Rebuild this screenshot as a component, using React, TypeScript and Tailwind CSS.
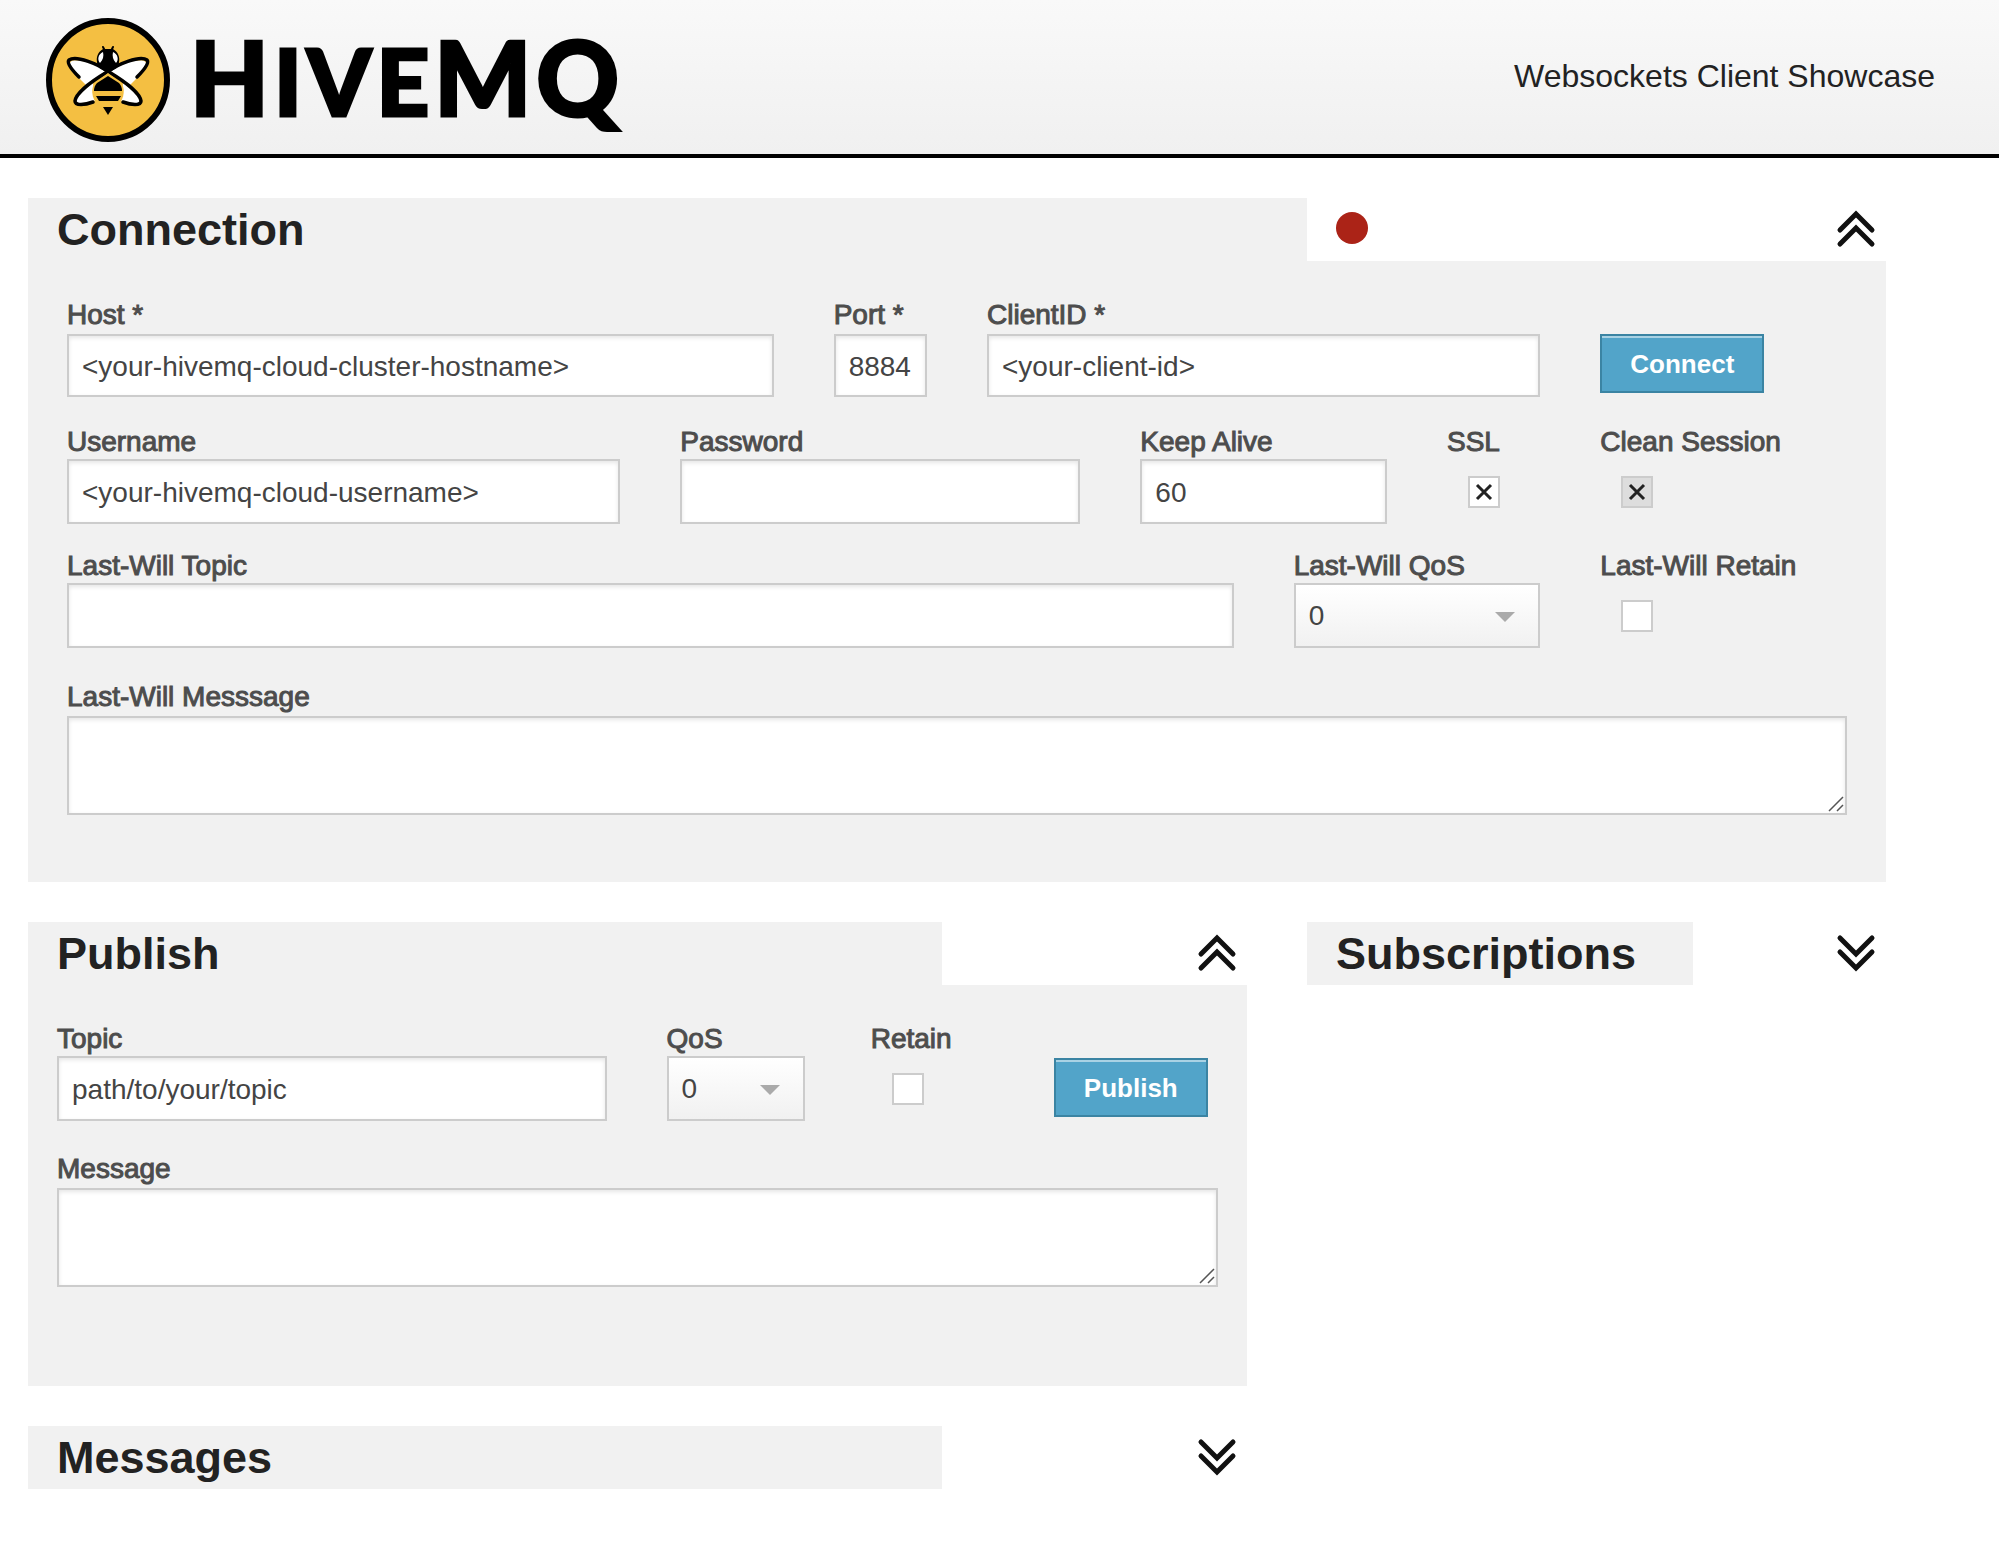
import React, { useId, useState } from "react";

function BeeLogo() {
  return (
    <svg className="size-[124px] shrink-0" viewBox="0 0 124 124" aria-hidden="true">
      <circle cx="62" cy="62" r="59" fill="#f4bf42" stroke="#000" strokeWidth="6" />
      <g fill="#fff">
        <path d="M61 52 C50 46 34 41 26 43 C20 46 28 54 33 60 L41 68 C47 62 54 57 61 52Z" />
        <path d="M63 52 C74 46 90 41 98 43 C104 46 96 54 91 60 L83 68 C77 62 70 57 63 52Z" />
        <path d="M47 65 C40 70 31 78 30 83 C30 87 40 85 49 83Z" />
        <path d="M77 65 C84 70 93 78 94 83 C94 87 84 85 75 83Z" />
      </g>
      <g fill="none" stroke="#000" strokeLinecap="round">
        <path d="M33 59 C27 53 20 45 23 42 C30 37 52 46 63 54 C78 63 94 75 95 83 C95 88 85 87 77 84" strokeWidth="3.5" />
        <path d="M91 59 C97 53 104 45 101 42 C94 37 72 46 61 54 C46 63 30 75 29 83 C29 88 39 87 47 84" strokeWidth="3.5" />
        <path d="M59 33 L57 29 M65 33 L67 29" strokeWidth="2" />
      </g>
      <path d="M57 31 H67 C72 34 74 39 73 44 C73 49 70 51 62 55 C54 51 51 49 51 44 C50 39 52 34 57 31Z" />
      <path d="M57 34 C52 36 51 42 54 45 C57 42 58 38 57 34Z M67 34 C72 36 73 42 70 45 C67 42 66 38 67 34Z" fill="#fff" />
      <path d="M62 55 L76 66 C80 74 77 82 70 91 L62 100 L54 91 C47 82 44 74 48 66Z" fill="#f4bf42" />
      <path d="M62 58 L73 65 Q76 68 76 73 H48 Q48 68 51 65Z M50 78 H75 L72 83 H53Z M57 89 H67 L62 97Z" />
    </svg>
  );
}

function Logo() {
  return (
    <a href="#" aria-label="HiveMQ" className="flex items-center gap-5 pt-1.5 text-black">
      <BeeLogo />
      <span className="flex items-baseline gap-[5px] pb-[3px] font-[Lato,sans-serif] text-[102px] leading-[114px] font-black [-webkit-text-stroke:3px_#000]">
        <span>H</span>
        <span className="flex gap-[5px] text-[92px]">
          <span>I</span>
          <span>V</span>
          <span>E</span>
        </span>
        <span>M</span>
        <span>Q</span>
      </span>
    </a>
  );
}

function Chevrons({ open }: { open: boolean }) {
  return (
    <svg className="mb-0.5 size-10" viewBox="0 0 40 40" fill="none" stroke="#111" strokeWidth="5" strokeLinecap="round" aria-hidden="true">
      {open ? <path d="M4 21 L20 5 L36 21 M4 35 L20 19 L36 35" /> : <path d="M4 5 L20 21 L36 5 M4 19 L20 35 L36 19" />}
    </svg>
  );
}

function PanelHeader({ title, open, columns, status }: { title: string; open: boolean; columns: string; status?: boolean }) {
  return (
    <div className={"grid h-[63px] " + columns}>
      <h2 className="bg-[#f1f1f1] pl-[29px] text-[45px] leading-[63px] font-bold text-[#222]">{title}</h2>
      <div className="flex items-center pr-[10px] pl-[29px]">
        {status && <span role="status" aria-label="Disconnected" className="mb-1 size-8 rounded-full bg-[#ab2317]" />}
        <button type="button" aria-label={"Toggle " + title} aria-expanded={open} className="ml-auto">
          <Chevrons open={open} />
        </button>
      </div>
    </div>
  );
}

const boxStyle = "block w-full border-2 border-[#ccc] bg-white px-[13px] pt-0.5 text-[28px] text-[#444] shadow-[inset_0_2px_4px_rgba(0,0,0,0.1)] outline-none";
const labelStyle = "block text-[28px] leading-[34px] whitespace-nowrap text-[#4d4d4d] [-webkit-text-stroke:1px_#4d4d4d]";

function TextField({ label, value = "", type = "text", span, required }: { label: string; value?: string; type?: string; span?: string; required?: boolean }) {
  const id = useId();
  return (
    <div className={span}>
      <label htmlFor={id} className={labelStyle + (required ? " mb-0.5" : "")}>{label}</label>
      <input id={id} type={type} defaultValue={value} required={required} className={boxStyle + (required ? " h-[63px]" : " h-[65px]")} />
    </div>
  );
}

function SelectField({ label, span, width = "w-full" }: { label: string; span?: string; width?: string }) {
  const id = useId();
  return (
    <div className={span}>
      <label htmlFor={id} className={labelStyle}>{label}</label>
      <div className={"relative " + width}>
        <select id={id} defaultValue="0" className="block h-[65px] w-full appearance-none border-2 border-[#ccc] bg-linear-to-b from-white to-[#f1f1f1] px-[13px] text-[28px] text-[#444] outline-none">
          <option>0</option>
          <option>1</option>
          <option>2</option>
        </select>
        <svg className="pointer-events-none absolute top-[29px] right-[25px] h-[10px] w-5" viewBox="0 0 20 10" aria-hidden="true">
          <path d="M0 0H20L10 10Z" fill="#aaa" />
        </svg>
      </div>
    </div>
  );
}

function CheckField({ label, checked = false, shaded, span }: { label: string; checked?: boolean; shaded?: boolean; span?: string }) {
  const id = useId();
  const [on, setOn] = useState(checked);
  return (
    <div className={span}>
      <label htmlFor={id} className={labelStyle}>{label}</label>
      <div className="relative mt-[17px] ml-[21px] size-8">
        <input id={id} type="checkbox" checked={on} onChange={() => setOn(!on)} className={"block size-8 appearance-none border-2 border-[#ccc] " + (shaded ? "bg-[#ddd]" : "bg-white")} />
        {on && (
          <svg className="pointer-events-none absolute inset-0" viewBox="0 0 32 32" stroke="#222" strokeWidth="3" aria-hidden="true">
            <path d="M9 9L23 23M23 9L9 23" />
          </svg>
        )}
      </div>
    </div>
  );
}

function MessageField({ label }: { label: string }) {
  const id = useId();
  return (
    <div>
      <label htmlFor={id} className={labelStyle + " mb-0.5"}>{label}</label>
      <div className="relative">
        <textarea id={id} className={boxStyle + " h-[99px] resize-none"} />
        <svg className="pointer-events-none absolute right-[3px] bottom-[3px] size-4" viewBox="0 0 16 16" fill="none" stroke="#555" strokeWidth="1.5" aria-hidden="true">
          <path d="M1 15L15 1M9 15L15 9" />
        </svg>
      </div>
    </div>
  );
}

function ActionButton({ children }: { children: React.ReactNode }) {
  return (
    <button type="button" className="mt-9 h-[59px] border-2 border-[#3b84a3] bg-[#52a4c9] px-7 pt-0.5 text-[26px] font-bold text-white shadow-[inset_0_2px_0_rgba(255,255,255,0.5)]">
      {children}
    </button>
  );
}

export default function App() {
  return (
    <div className="min-h-screen bg-white font-['Liberation_Sans',Arial,sans-serif]">
      <header className="flex h-[158px] items-center justify-between border-b-4 border-black bg-linear-to-b from-[#f9f9f9] to-[#f0f0f0] pr-16 pl-[46px]">
        <Logo />
        <p className="pb-0.5 text-[32px] text-[#222]">Websockets Client Showcase</p>
      </header>

      <main className="flex flex-col gap-10 pt-10 pr-[113px] pl-7">
        <section>
          <PanelHeader title="Connection" open columns="grid-cols-[1279fr_579fr]" status />
          <form className="bg-[#f1f1f1] px-[39px] pt-[37px] pb-[67px]">
            <div className="grid grid-cols-12 gap-x-[60px]">
              <TextField label="Host *" value="<your-hivemq-cloud-cluster-hostname>" span="col-span-5" required />
              <TextField label="Port *" value="8884" required />
              <TextField label="ClientID *" value="<your-client-id>" span="col-span-4" required />
              <div className="col-span-2">
                <ActionButton>Connect</ActionButton>
              </div>
            </div>
            <div className="mt-7 grid grid-cols-12 gap-x-[60px]">
              <TextField label="Username" value="<your-hivemq-cloud-username>" span="col-span-4" />
              <TextField label="Password" type="password" span="col-span-3" />
              <TextField label="Keep Alive" value="60" span="col-span-2" />
              <CheckField label="SSL" checked />
              <CheckField label="Clean Session" checked shaded span="col-span-2" />
            </div>
            <div className="mt-[25px] mb-8 grid grid-cols-12 gap-x-[60px]">
              <TextField label="Last-Will Topic" span="col-span-8" />
              <SelectField label="Last-Will QoS" span="col-span-2" />
              <CheckField label="Last-Will Retain" span="col-span-2" />
            </div>
            <MessageField label="Last-Will Messsage" />
          </form>
        </section>

        <div className="grid grid-cols-[1219fr_579fr] items-start gap-[60px]">
          <div className="flex flex-col gap-10">
            <section>
              <PanelHeader title="Publish" open columns="grid-cols-[3fr_1fr]" />
              <form className="bg-[#f1f1f1] px-[29px] pt-[37px] pb-[99px]">
                <div className="mb-[31px] grid grid-cols-[549fr_144fr_123fr_164fr] gap-x-[60px]">
                  <TextField label="Topic" value="path/to/your/topic" />
                  <SelectField label="QoS" width="w-[138px]" />
                  <CheckField label="Retain" />
                  <div>
                    <ActionButton>Publish</ActionButton>
                  </div>
                </div>
                <MessageField label="Message" />
              </form>
            </section>
            <section>
              <PanelHeader title="Messages" open={false} columns="grid-cols-[3fr_1fr]" />
            </section>
          </div>
          <section>
            <PanelHeader title="Subscriptions" open={false} columns="grid-cols-[2fr_1fr]" />
          </section>
        </div>
      </main>
    </div>
  );
}
